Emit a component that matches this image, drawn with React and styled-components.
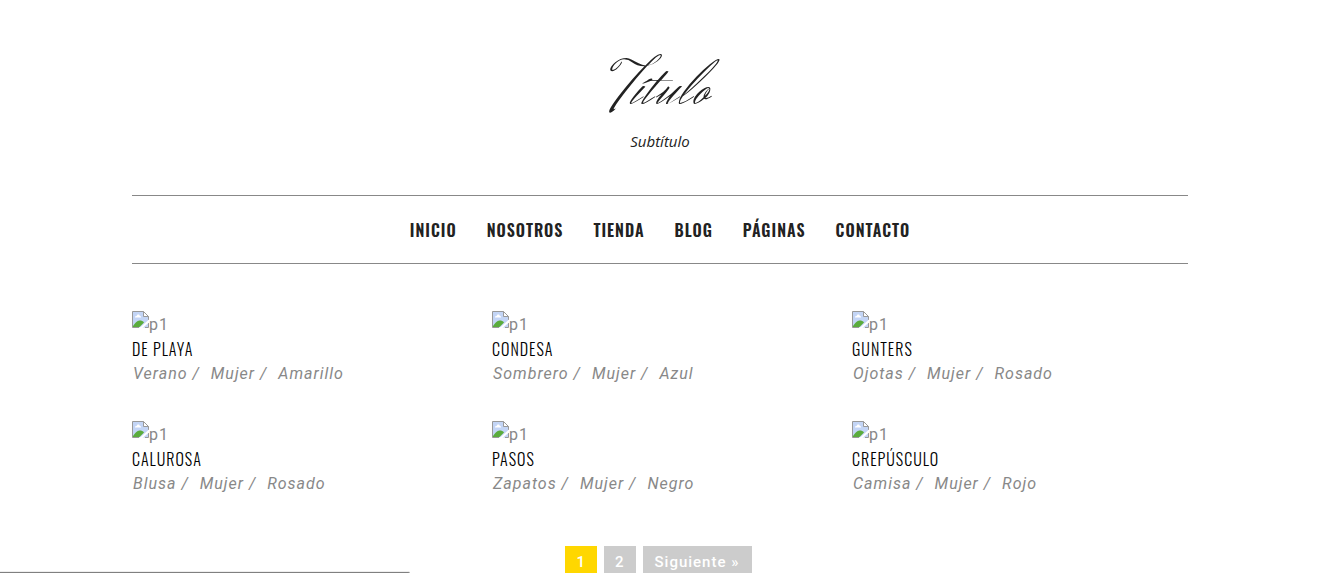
import React from 'react';
import styled, { createGlobalStyle } from 'styled-components';

const GlobalStyle = createGlobalStyle`
  * { box-sizing: border-box; }
  html, body { margin: 0; background: #fff; overflow-x: hidden; }
  body { font-family: Roboto, "Liberation Sans", sans-serif; color: #888; }
  h1, h2, p, ul { margin: 0; padding: 0; }
  ul { list-style: none; }
  a { color: inherit; text-decoration: none; }
`;

const Page = styled.div`
  padding: 50px 130px 0 132px;
`;

const Header = styled.header`
  display: flex;
  flex-direction: column;
  align-items: center;
`;

const Title = styled.h1`
  font: 400 66px/80px "Herr Von Muellerhoff", "Liberation Serif", serif;
  letter-spacing: 2px;
  color: #222;
`;

const Subtitle = styled.p`
  margin-top: 1px;
  font: italic 400 15px/20px "Open Sans", sans-serif;
  color: #222;
`;

const Nav = styled.nav`
  margin-top: 44px;
  border-top: 1px solid #888;
  border-bottom: 1px solid #888;
`;

const NavList = styled.ul`
  display: flex;
  justify-content: center;
  gap: 30px;
  padding-top: 2px;
`;

const NavLink = styled.a`
  display: block;
  font: 600 16px/65px Oswald, "Liberation Sans", sans-serif;
  letter-spacing: 1px;
  text-transform: uppercase;
  color: #222;
`;

const Products = styled.ul`
  display: grid;
  grid-template-columns: repeat(3, 1fr);
  gap: 35px 24px;
  margin-top: 47px;
`;

const Thumb = styled.div`
  display: flex;
  height: 26px;
  font-size: 16px;
  line-height: 28px;
  letter-spacing: 1px;
`;

const ProductName = styled.h2`
  font: 300 16px/25px Oswald, "Liberation Sans", sans-serif;
  letter-spacing: 1px;
  text-transform: uppercase;
  color: #000;
`;

const Tags = styled.p`
  display: flex;
  font-size: 16px;
  font-style: italic;
  line-height: 24px;
  letter-spacing: 1px;
  white-space: pre;
`;

const Tag = styled.span`
  padding-left: 1px;
`;

const Pagination = styled.nav`
  display: flex;
  justify-content: center;
  gap: 7px;
  margin-top: 50px;
  padding-right: 3px;
`;

const PageButton = styled.button`
  border: 0;
  padding: 0 ${(p) => (p.$wide ? '12px' : '11px')};
  height: 32px;
  background: ${(p) => (p.$current ? '#ffd700' : '#ccc')};
  color: #fff;
  font: 500 15px/32px Roboto, sans-serif;
  letter-spacing: 1px;
`;

const StatusEdge = styled.div`
  position: fixed;
  left: 0;
  bottom: 0;
  width: 410px;
  height: 2px;
  border-top: 1px solid #eee;
  border-top-right-radius: 2px;
  background: #808080;
`;

const MissingImage = () => (
  <svg width="17" height="17" viewBox="0 0 17 17" aria-hidden="true">
    <path d="M.5.5h11l5 5v11H.5z" fill="#c3d5f6" />
    <path d="M3 6.500V5.500l1.500-.5 1-1.500h1.500l1 1.500 1 .5v1z" fill="#fff" />
    <path d="M1 16v-1c2-3 4-5.500 6.500-5.500 2 0 3.500.5 4.500 2L7.500 16z" fill="#5aac3c" />
    <path d="M.5 16.500V.5h11l5 5V9M.5 16.500H7M13 16.500h3.500V12" fill="none" stroke="#999" />
    <path d="M11.500.5v5h5z" fill="#fff" stroke="#999" />
    <path d="M7.500 17L17 8.500v3l-6.500 5.500z" fill="#fff" />
  </svg>
);

const sections = ['Inicio', 'Nosotros', 'Tienda', 'Blog', 'Páginas', 'Contacto'];

const products = [
  { name: 'De playa', tags: ['Verano', 'Mujer', 'Amarillo'] },
  { name: 'Condesa', tags: ['Sombrero', 'Mujer', 'Azul'] },
  { name: 'Gunters', tags: ['Ojotas', 'Mujer', 'Rosado'] },
  { name: 'Calurosa', tags: ['Blusa', 'Mujer', 'Rosado'] },
  { name: 'Pasos', tags: ['Zapatos', 'Mujer', 'Negro'] },
  { name: 'Crepúsculo', tags: ['Camisa', 'Mujer', 'Rojo'] },
];

export default function App() {
  return (
    <>
      <GlobalStyle />
      <Page>
        <Header>
          <Title>Título</Title>
          <Subtitle>Subtítulo</Subtitle>
        </Header>
        <Nav>
          <NavList>
            {sections.map((s) => (
              <li key={s}><NavLink href="#">{s}</NavLink></li>
            ))}
          </NavList>
        </Nav>
        <main>
          <Products>
            {products.map((p) => (
              <li key={p.name}>
                <Thumb><MissingImage />p1</Thumb>
                <ProductName><a href="#">{p.name}</a></ProductName>
                <Tags>
                  {p.tags.map((tag, i) => (
                    <Tag key={tag}>{i < p.tags.length - 1 ? `${tag} /  ` : tag}</Tag>
                  ))}
                </Tags>
              </li>
            ))}
          </Products>
          <Pagination aria-label="Paginación">
            <PageButton type="button" $current aria-current="page">1</PageButton>
            <PageButton type="button">2</PageButton>
            <PageButton type="button" $wide>Siguiente »</PageButton>
          </Pagination>
        </main>
      </Page>
      <StatusEdge />
    </>
  );
}
